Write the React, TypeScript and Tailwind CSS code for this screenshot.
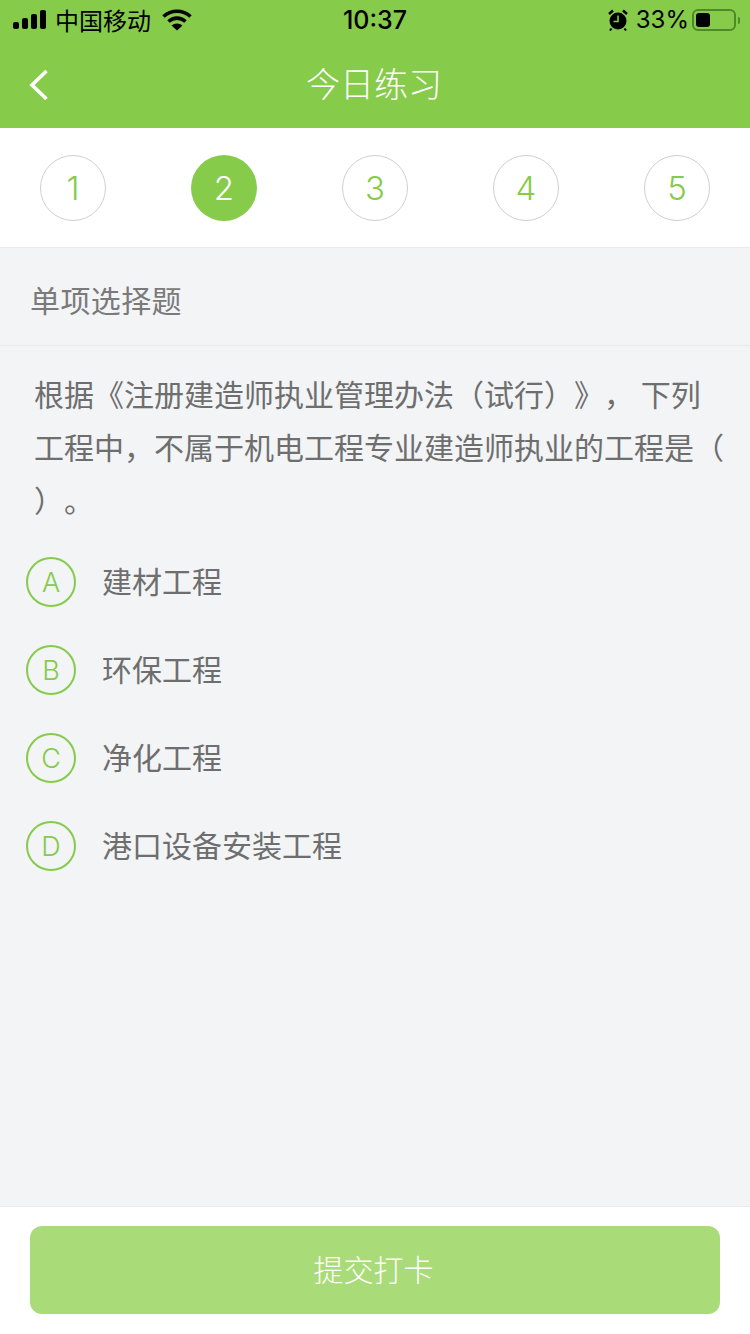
/**
 * Daily practice page: one single-choice question with a question stepper.
 */
import React from 'react';

const STEPS = [1, 2, 3, 4, 5];
const OPTIONS = [
  { key: 'A', text: '建材工程' },
  { key: 'B', text: '环保工程' },
  { key: 'C', text: '净化工程' },
  { key: 'D', text: '港口设备安装工程' },
];

function SignalBars() {
  return (
    <svg width="34" height="20" viewBox="0 0 34 20" fill="#000">
      <rect x="0" y="12" width="6" height="7" rx="2" />
      <rect x="9" y="8" width="6" height="11" rx="2" />
      <rect x="18" y="4" width="6" height="15" rx="2" />
      <rect x="27" y="0" width="6" height="19" rx="2" />
    </svg>
  );
}

function WifiIcon() {
  return (
    <svg width="30" height="22" viewBox="0 0 30 22" fill="none" stroke="#000" strokeWidth="3.6">
      <path d="M1.5 7.5C9 0.5 21 0.5 28.5 7.5" />
      <path d="M6.5 12.5C11.5 8 18.5 8 23.5 12.5" />
      <path d="M15 21.5L9.5 16.5C12.5 13.8 17.5 13.8 20.5 16.5Z" fill="#000" stroke="none" />
    </svg>
  );
}

function AlarmIcon() {
  return (
    <svg width="20" height="22" viewBox="0 0 20 22">
      <circle cx="10" cy="12" r="8.5" fill="#000" />
      <path d="M1 5L5 1.5M19 5L15 1.5" stroke="#000" strokeWidth="2.4" />
      <path d="M3.5 19.5L2 21.5M16.5 19.5L18 21.5" stroke="#000" strokeWidth="2" />
      <path d="M10 6.5V12.5H5.5" fill="none" stroke="#86cb4a" strokeWidth="1.6" />
    </svg>
  );
}

function Battery() {
  return (
    <div className="flex items-center gap-[2px]">
      <div className="w-[44px] h-[22px] rounded-[6px] border-2 border-[#4f8a2a] p-[2px]">
        <div className="w-[14px] h-full rounded-[3px] bg-black" />
      </div>
      <div className="w-[2px] h-[7px] rounded-r-sm bg-[#4f8a2a]" />
    </div>
  );
}

export default function App() {
  return (
    <div
      className="w-[750px] h-[1334px] flex flex-col bg-[#f2f4f6] overflow-hidden [text-spacing-trim:space-all]"
      style={{ fontFamily: '"Noto Sans CJK SC", "Liberation Sans", sans-serif' }}
    >
      {/* Status bar + nav */}
      <header className="h-[128px] bg-[#86cb4a] flex flex-col shrink-0">
        <div className="h-[40px] pl-[13px] pr-[10px] flex items-center justify-between text-black relative">
          <div className="flex items-center">
            <SignalBars />
            <span className="ml-[8px] text-[24px] leading-none">中国移动</span>
            <span className="ml-[11px]"><WifiIcon /></span>
          </div>
          <span className="absolute left-0 right-0 text-center text-[25px] font-medium leading-none" style={{ fontFamily: 'Inter, sans-serif' }}>
            10:37
          </span>
          <div className="flex items-center">
            <AlarmIcon />
            <span className="ml-[8px] text-[24px] leading-none" style={{ fontFamily: 'Inter, sans-serif' }}>33%</span>
            <span className="ml-[3px]"><Battery /></span>
          </div>
        </div>
        <div className="flex-1 relative flex items-center justify-center pb-[3px] pr-[2px]">
          <svg className="absolute left-[29px] top-[29px]" width="20" height="32" viewBox="0 0 20 32" fill="none" stroke="#fff" strokeWidth="3.6">
            <path d="M17.5 2L3 16L17.5 30" />
          </svg>
          <h1 className="text-[34px] leading-none text-white font-light">今日练习</h1>
        </div>
      </header>

      {/* Question stepper */}
      <div className="h-[120px] bg-white border-b border-[#e8e9eb] px-[40px] flex items-center justify-between shrink-0">
        {STEPS.map((n) =>
          n === 2 ? (
            <div key={n} className="w-[66px] h-[66px] pt-[2px] rounded-full bg-[#86cb4a] text-white flex items-center justify-center text-[33px] font-light" style={{ fontFamily: 'Inter, sans-serif' }}>
              {n}
            </div>
          ) : (
            <div key={n} className="w-[66px] h-[66px] pt-[2px] rounded-full border border-[#cfcfcf] text-[#86cb4a] flex items-center justify-center text-[33px] font-light" style={{ fontFamily: 'Inter, sans-serif' }}>
              {n}
            </div>
          ),
        )}
      </div>

      {/* Question type */}
      <div className="h-[98px] border-b border-[#e8e9eb] px-[30px] pt-[4px] flex items-center shrink-0">
        <span className="text-[30px] tracking-[0.4px] leading-none text-[#7a7a7a]">单项选择题</span>
      </div>

      {/* Question + options */}
      <main className="flex-1 flex flex-col">
        <p className="mt-[21px] pl-[34px] pr-[24px] text-[30px] leading-[53px] text-[#6e6e6e]">
          根据《注册建造师执业管理办法（试行）》， 下列工程中，不属于机电工程专业建造师执业的工程是（ ）。
        </p>
        <ul className="mt-[31px] flex flex-col gap-[38px] pl-[26px]">
          {OPTIONS.map((o) => (
            <li key={o.key} className="flex items-center">
              <span className="w-[50px] h-[50px] pt-[2px] rounded-full border-2 border-[#86cb4a] text-[#86cb4a] flex items-center justify-center text-[27px] font-light" style={{ fontFamily: 'Inter, sans-serif' }}>
                {o.key}
              </span>
              <span className="ml-[26px] pb-[4px] text-[30px] leading-none text-[#6e6e6e]">{o.text}</span>
            </li>
          ))}
        </ul>
      </main>

      {/* Submit */}
      <footer className="h-[128px] bg-white border-t border-[#e8e9eb] px-[30px] pt-[19px] shrink-0">
        <button className="w-full h-[88px] pb-[4px] pr-[3px] rounded-[12px] bg-[#a9db79] text-white text-[30px] font-light">提交打卡</button>
      </footer>
    </div>
  );
}
